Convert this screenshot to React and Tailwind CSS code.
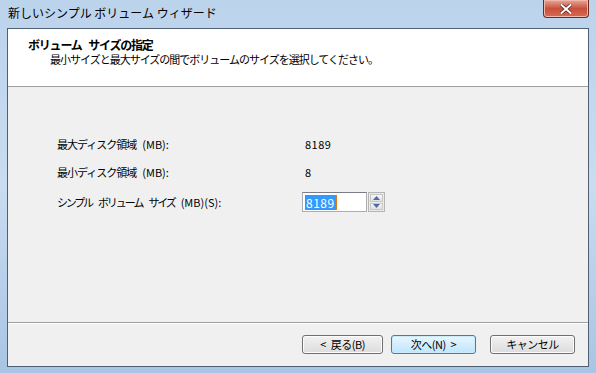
const font = { fontFamily: '"Noto Sans CJK JP", "Noto Sans", sans-serif' };

const Button = ({ children, focused, wide }) => (
  <button
    className={
      focused
        ? "flex h-[19px] w-[85px] items-center justify-center rounded-[3px] border border-[#3c7fb1] bg-gradient-to-b from-[#eaf6fd] to-[#bee6fd] text-[11px] leading-none tracking-[-0.5px] text-black [word-spacing:3px] shadow-[inset_0_0_0_1px_#cdeaf9]"
        : wide
          ? "flex h-[19px] w-[85px] items-center justify-center rounded-[3px] border border-[#707070] bg-gradient-to-b from-[#f2f2f2] to-[#dcdcdc] text-[11px] leading-none tracking-[-0.5px] text-black [word-spacing:3px] shadow-[inset_0_0_0_1px_#fcfcfc]"
          : "flex h-[19px] w-[81px] items-center justify-center rounded-[3px] border border-[#707070] bg-gradient-to-b from-[#f2f2f2] to-[#dcdcdc] text-[11px] leading-none tracking-[-0.5px] text-black [word-spacing:3px] shadow-[inset_0_0_0_1px_#fcfcfc]"
    }
  >
    {children}
  </button>
);

export default function App() {
  return (
    <div
      className="flex h-[373px] w-[596px] flex-col bg-gradient-to-b from-[#bcd3ec] via-[#c9dcf0] to-[#a9c4e4]"
      style={font}
    >
      <div className="flex h-[28px] shrink-0 items-start justify-between pl-[8px]">
        <span className="mt-[5px] text-[12px] leading-[16px] text-black">
          新しいシンプル ボリューム ウィザード
        </span>
        <div className="mr-[7px] flex h-[18px] w-[46px] items-center justify-center rounded-b-[4px] border border-t-0 border-[#6b2a20] bg-gradient-to-b from-[#e8a597] via-[#c9503b] to-[#d66a52] shadow-[inset_0_0_0_1px_#f0b8aa]">
          <svg width="12" height="10" viewBox="0 0 12 10">
            <path
              d="M1.5 1 L10.5 9 M10.5 1 L1.5 9"
              stroke="#5a2a24"
              strokeWidth="3.6"
              strokeLinecap="square"
            />
            <path
              d="M1.5 1 L10.5 9 M10.5 1 L1.5 9"
              stroke="#ffffff"
              strokeWidth="2"
              strokeLinecap="square"
            />
          </svg>
        </div>
      </div>

      <div className="mx-[7px] mb-[6px] flex flex-1 flex-col border border-[#4f5f74] bg-[#f0f0f0]">
        <div className="h-[58px] shrink-0 border-b border-[#a0a0a0] bg-white pl-[20px] pt-[9px]">
          <div className="text-[12px] font-bold leading-[14px] tracking-[-1.2px] text-black [word-spacing:5px]">
            ボリューム サイズの指定
          </div>
          <div className="pl-[22px] text-[11px] leading-[15px] tracking-[-1px] text-black">
            最小サイズと最大サイズの間でボリュームのサイズを選択してください。
          </div>
        </div>

        <div className="flex-1 pl-[49px] pt-[49px] text-[11px] text-black">
          <div className="flex h-[28px] items-start">
            <span className="flex w-[248px] gap-[6px]">
              <span className="tracking-[-1px]">最大ディスク領域</span>
              <span>(MB):</span>
            </span>
            <span className="tracking-[0.5px]">8189</span>
          </div>
          <div className="flex h-[28px] items-start">
            <span className="flex w-[248px] gap-[6px]">
              <span className="tracking-[-1px]">最小ディスク領域</span>
              <span>(MB):</span>
            </span>
            <span>8</span>
          </div>
          <div className="flex items-center">
            <span className="flex w-[245px] gap-[6px]">
              <span className="tracking-[-2.2px]">シンプル</span>
              <span className="tracking-[-2px]">ボリューム</span>
              <span className="tracking-[-2.2px]">サイズ</span>
              <span>(MB)(S):</span>
            </span>
            <div className="flex h-[20px] w-[65px] items-center border border-[#abadb3] border-t-[#7a7d87] bg-white pl-[2px]">
              <span className="bg-[#3399ff] px-[1px] text-[12px] leading-[15px] tracking-[0.5px] text-white">
                8189
              </span>
              <span className="h-[15px] w-[1px] bg-[#e07a10]" />
            </div>
            <div className="ml-[1px] flex h-[20px] w-[17px] flex-col gap-[1px] border border-[#b5b5b5] bg-[#eaeaea] p-[1px]">
              <div className="flex flex-1 items-center justify-center border border-[#c8c8c8] bg-gradient-to-b from-[#f6f6f6] to-[#e0e0e0]">
                <svg width="7" height="4" viewBox="0 0 7 4">
                  <path d="M3.5 0 L7 4 L0 4 Z" fill="#5468a8" />
                </svg>
              </div>
              <div className="flex flex-1 items-center justify-center border border-[#c8c8c8] bg-gradient-to-b from-[#f6f6f6] to-[#e0e0e0]">
                <svg width="7" height="4" viewBox="0 0 7 4">
                  <path d="M0 0 L7 0 L3.5 4 Z" fill="#5468a8" />
                </svg>
              </div>
            </div>
          </div>
        </div>

        <div className="flex h-[44px] shrink-0 items-start gap-[8px] border-t border-[#a0a0a0] pl-[294px] pt-[12px] shadow-[inset_0_1px_0_#ffffff]">
          <Button>&lt; 戻る(B)</Button>
          <Button focused>次へ(N) &gt;</Button>
          <div className="ml-[6px]">
            <Button wide>キャンセル</Button>
          </div>
        </div>
      </div>
    </div>
  );
}
